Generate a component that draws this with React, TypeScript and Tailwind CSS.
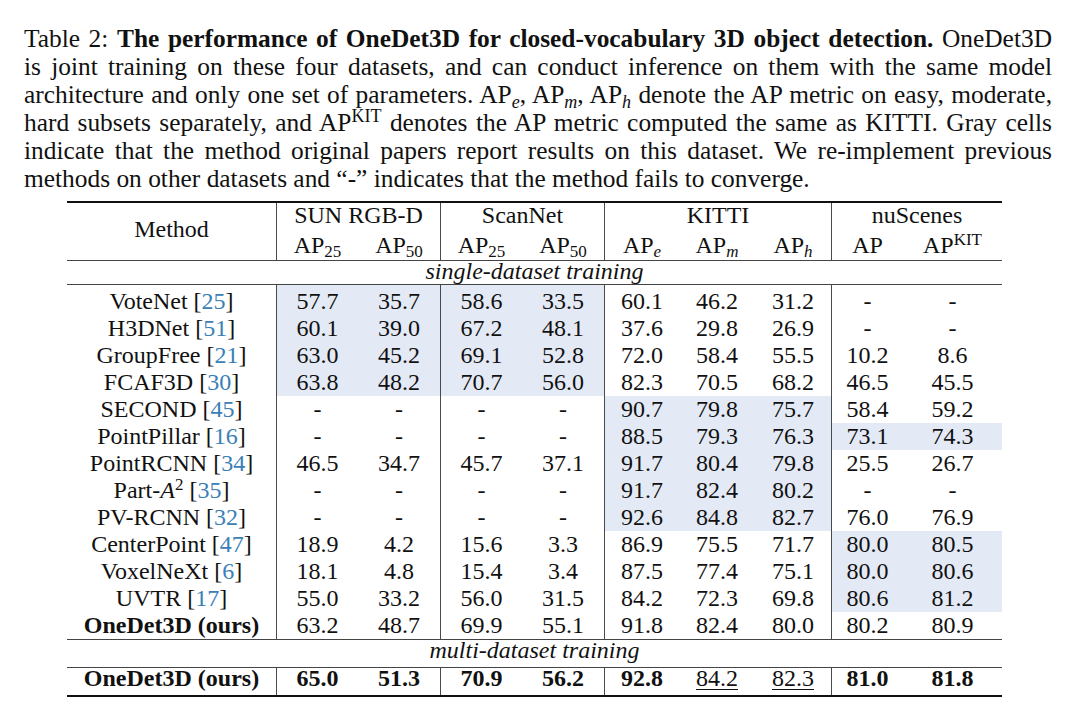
import React from "react";

const W = [
  "w-[82px]",
  "w-[82px]",
  "w-[82px]",
  "w-[82px]",
  "w-[75px]",
  "w-[76px]",
  "w-[76px]",
  "w-[72px]",
  "w-[99px]",
];
const BL = [true, false, true, false, true, false, false, true, false];

type Row = {
  name: React.ReactNode;
  cite?: string;
  v: string[];
  shade: number[];
  bold?: boolean;
};

const SS = [0, 1, 2, 3];
const KT = [4, 5, 6];
const NU = [7, 8];

const rows: Row[] = [
  { name: "VoteNet", cite: "25", v: ["57.7", "35.7", "58.6", "33.5", "60.1", "46.2", "31.2", "-", "-"], shade: SS },
  { name: "H3DNet", cite: "51", v: ["60.1", "39.0", "67.2", "48.1", "37.6", "29.8", "26.9", "-", "-"], shade: SS },
  { name: "GroupFree", cite: "21", v: ["63.0", "45.2", "69.1", "52.8", "72.0", "58.4", "55.5", "10.2", "8.6"], shade: SS },
  { name: "FCAF3D", cite: "30", v: ["63.8", "48.2", "70.7", "56.0", "82.3", "70.5", "68.2", "46.5", "45.5"], shade: SS },
  { name: "SECOND", cite: "45", v: ["-", "-", "-", "-", "90.7", "79.8", "75.7", "58.4", "59.2"], shade: KT },
  { name: "PointPillar", cite: "16", v: ["-", "-", "-", "-", "88.5", "79.3", "76.3", "73.1", "74.3"], shade: [...KT, ...NU] },
  { name: "PointRCNN", cite: "34", v: ["46.5", "34.7", "45.7", "37.1", "91.7", "80.4", "79.8", "25.5", "26.7"], shade: KT },
  {
    name: (
      <>
        Part-<i>A</i>
        <sup className="text-[17px]">2</sup>
      </>
    ),
    cite: "35",
    v: ["-", "-", "-", "-", "91.7", "82.4", "80.2", "-", "-"],
    shade: KT,
  },
  { name: "PV-RCNN", cite: "32", v: ["-", "-", "-", "-", "92.6", "84.8", "82.7", "76.0", "76.9"], shade: KT },
  { name: "CenterPoint", cite: "47", v: ["18.9", "4.2", "15.6", "3.3", "86.9", "75.5", "71.7", "80.0", "80.5"], shade: NU },
  { name: "VoxelNeXt", cite: "6", v: ["18.1", "4.8", "15.4", "3.4", "87.5", "77.4", "75.1", "80.0", "80.6"], shade: NU },
  { name: "UVTR", cite: "17", v: ["55.0", "33.2", "56.0", "31.5", "84.2", "72.3", "69.8", "80.6", "81.2"], shade: NU },
  { name: "OneDet3D (ours)", v: ["63.2", "48.7", "69.9", "55.1", "91.8", "82.4", "80.0", "80.2", "80.9"], shade: [], bold: true },
];

function Cite({ n }: { n: string }) {
  return <span className="text-[#3a80b6]">{n}</span>;
}

function DataRow({ r, first }: { r: Row; first: boolean }) {
  const h = first ? "h-[30px] pt-[3px] leading-[27px]" : "h-[27px] leading-[27px]";
  return (
    <div className="flex">
      <div className={`w-[209px] text-center whitespace-nowrap ${h} ${r.bold ? "font-bold" : ""}`}>
        {r.name}
        {r.cite ? (
          <>
            {" "}[<Cite n={r.cite} />]
          </>
        ) : null}
      </div>
      {r.v.map((v, i) => (
        <div
          key={i}
          className={`${W[i]} ${h} text-center ${BL[i] ? "border-l border-[#4a4a4a]" : ""} ${
            r.shade.includes(i) ? "bg-[#e4eaf5]" : ""
          }`}
        >
          {v}
        </div>
      ))}
    </div>
  );
}

function Sub({ children }: { children: React.ReactNode }) {
  return <sub className="text-[17px]">{children}</sub>;
}

function HeadCell({ w, children }: { w: string; children: React.ReactNode }) {
  return <div className={`${w} text-center whitespace-nowrap`}>{children}</div>;
}

function Rule({ thick }: { thick?: boolean }) {
  return <div className={thick ? "h-[2px] bg-[#111]" : "h-px bg-[#444]"} />;
}

export default function App() {
  const finalVals: { v: string; s: "b" | "u" }[] = [
    { v: "65.0", s: "b" },
    { v: "51.3", s: "b" },
    { v: "70.9", s: "b" },
    { v: "56.2", s: "b" },
    { v: "92.8", s: "b" },
    { v: "84.2", s: "u" },
    { v: "82.3", s: "u" },
    { v: "81.0", s: "b" },
    { v: "81.8", s: "b" },
  ];
  const lineCls = "h-[28px] leading-[28px] text-justify [text-align-last:justify] whitespace-nowrap";
  return (
    <div className="w-[1080px] h-[722px] overflow-hidden bg-white text-[#111] [font-family:'Liberation_Serif','Times_New_Roman',serif]">
      {/* Caption */}
      <div className="pt-[24px] pl-[24px] w-[1052px] text-[25.4px]">
        <div className={lineCls}>
          Table 2: <b>The performance of OneDet3D for closed-vocabulary 3D object detection.</b> OneDet3D
        </div>
        <div className={lineCls}>
          is joint training on these four datasets, and can conduct inference on them with the same model
        </div>
        <div className={lineCls}>
          architecture and only one set of parameters. AP
          <sub className="text-[18px] italic">e</sub>, AP<sub className="text-[18px] italic">m</sub>, AP
          <sub className="text-[18px] italic">h</sub> denote the AP metric on easy, moderate,
        </div>
        <div className={lineCls}>
          hard subsets separately, and AP<sup className="text-[18px]">KIT</sup> denotes the AP metric computed the
          same as KITTI. Gray cells
        </div>
        <div className={lineCls}>
          indicate that the method original papers report results on this dataset. We re-implement previous
        </div>
        <div className="h-[28px] leading-[28px] whitespace-nowrap">
          methods on other datasets and “-” indicates that the method fails to converge.
        </div>
      </div>

      {/* Table */}
      <div className="ml-[67px] mt-[9px] w-[935px] text-[24px]">
        <Rule thick />
        {/* Header */}
        <div className="flex h-[57px]">
          <div className="w-[209px] pt-[13px] leading-[27px] text-center">Method</div>
          <div className="w-[164px] border-l border-[#4a4a4a] flex flex-col">
            <div className="h-[29px] leading-[25px] text-center">SUN RGB-D</div>
            <div className="flex h-[28px] leading-[26px]">
              <HeadCell w="w-[81px]">
                AP<Sub>25</Sub>
              </HeadCell>
              <HeadCell w="w-[82px]">
                AP<Sub>50</Sub>
              </HeadCell>
            </div>
          </div>
          <div className="w-[164px] border-l border-[#4a4a4a] flex flex-col">
            <div className="h-[29px] leading-[25px] text-center">ScanNet</div>
            <div className="flex h-[28px] leading-[26px]">
              <HeadCell w="w-[81px]">
                AP<Sub>25</Sub>
              </HeadCell>
              <HeadCell w="w-[82px]">
                AP<Sub>50</Sub>
              </HeadCell>
            </div>
          </div>
          <div className="w-[227px] border-l border-[#4a4a4a] flex flex-col">
            <div className="h-[29px] leading-[25px] text-center">KITTI</div>
            <div className="flex h-[28px] leading-[26px]">
              <HeadCell w="w-[74px]">
                AP<Sub><i>e</i></Sub>
              </HeadCell>
              <HeadCell w="w-[76px]">
                AP<Sub><i>m</i></Sub>
              </HeadCell>
              <HeadCell w="w-[76px]">
                AP<Sub><i>h</i></Sub>
              </HeadCell>
            </div>
          </div>
          <div className="w-[171px] border-l border-[#4a4a4a] flex flex-col">
            <div className="h-[29px] leading-[25px] text-center">nuScenes</div>
            <div className="flex h-[28px] leading-[26px]">
              <HeadCell w="w-[71px]">AP</HeadCell>
              <HeadCell w="w-[99px]">
                AP<sup className="text-[17px]">KIT</sup>
              </HeadCell>
            </div>
          </div>
        </div>
        <Rule />
        <div className="h-[23px] leading-[21px] text-center italic">single-dataset training</div>
        <Rule />
        {rows.map((r, i) => (
          <DataRow key={i} r={r} first={i === 0} />
        ))}
        <Rule />
        <div className="h-[27px] leading-[20px] text-center italic">multi-dataset training</div>
        <Rule />
        <div className="flex">
          <div className="w-[209px] h-[27px] leading-[21px] text-center font-bold whitespace-nowrap">
            OneDet3D (ours)
          </div>
          {finalVals.map((c, i) => (
            <div
              key={i}
              className={`${W[i]} h-[27px] leading-[21px] text-center ${BL[i] ? "border-l border-[#4a4a4a]" : ""}`}
            >
              {c.s === "b" ? (
                <span className="font-bold">{c.v}</span>
              ) : (
                <span className="underline decoration-1 underline-offset-[3px]">{c.v}</span>
              )}
            </div>
          ))}
        </div>
        <Rule thick />
      </div>
    </div>
  );
}
